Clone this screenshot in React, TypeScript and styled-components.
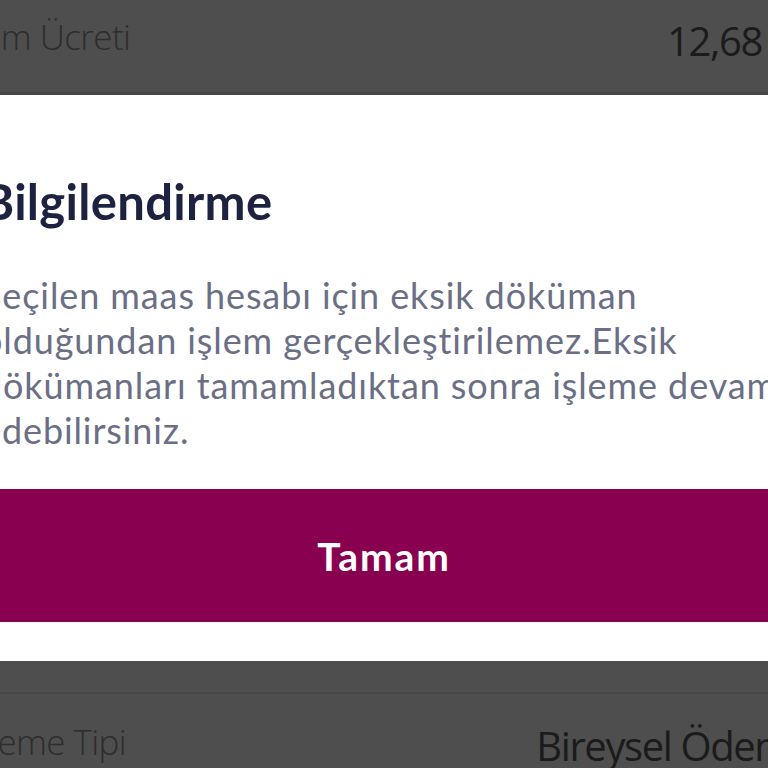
import React from "react";
import styled, { createGlobalStyle } from "styled-components";

const Global = createGlobalStyle`
  html, body { margin: 0; padding: 0; background: #4e4e4e; }
  body { overflow: hidden; }
  * { box-sizing: border-box; }
`;

const Viewport = styled.div`
  width: 768px;
  height: 768px;
  overflow: hidden;
  background: #4e4e4e;
  display: flex;
  flex-direction: column;
`;

const RowList = styled.div`
  margin-left: -49px;
  width: 860px;
  display: flex;
  flex-direction: column;
  flex-shrink: 0;
`;

const InfoRow = styled.div<{ $h: number; $pad: number }>`
  height: ${(p) => p.$h}px;
  padding-top: ${(p) => p.$pad}px;
  display: flex;
  justify-content: space-between;
  align-items: flex-start;
  border-bottom: 3px solid #474747;
`;

const RowLabel = styled.span`
  font-family: "Open Sans", "Liberation Sans", sans-serif;
  font-weight: 300;
  font-size: 35px;
  letter-spacing: -0.6px;
  color: #2d2d2d;
`;

const RowValue = styled.span`
  font-family: "Open Sans", "Liberation Sans", sans-serif;
  font-weight: 400;
  font-size: 40px;
  letter-spacing: -1.4px;
  color: #1b1b1b;
`;

const Dialog = styled.div`
  margin-left: -18px;
  width: 840px;
  flex-shrink: 0;
  background: #ffffff;
  display: flex;
  flex-direction: column;
  align-items: flex-start;
  padding: 78px 0 39px 0;
`;

const Title = styled.h2`
  margin: 0;
  font-family: Lato, "Noto Sans", sans-serif;
  font-weight: 700;
  font-size: 49px;
  line-height: 56px;
  letter-spacing: 0.3px;
  color: #1d2241;
`;

const Message = styled.p`
  margin: 44px 0 0 0;
  font-family: Lato, "Noto Sans", sans-serif;
  font-weight: 400;
  font-size: 36px;
  line-height: 45px;
  letter-spacing: 0.9px;
  color: #6b6f86;
  width: 820px;
`;

const PrimaryButton = styled.button`
  margin-top: 36px;
  width: 804px;
  height: 133px;
  border: none;
  padding: 0;
  background: #8a0050;
  color: #ffffff;
  font-family: Lato, "Noto Sans", sans-serif;
  font-weight: 700;
  font-size: 39px;
  letter-spacing: 1.9px;
  cursor: pointer;
`;

const Spacer = styled.div`
  height: 33px;
  border-bottom: 2px solid #474747;
`;

export default function App() {
  return (
    <>
      <Global />
      <Viewport>
        <RowList>
          <InfoRow $h={95} $pad={13}>
            <RowLabel>İşlem Ücreti</RowLabel>
            <RowValue>12,68 TL</RowValue>
          </InfoRow>
        </RowList>
        <Dialog>
          <Title>Bilgilendirme</Title>
          <Message>
            Seçilen maas hesabı için eksik döküman olduğundan işlem
            gerçekleştirilemez.Eksik dökümanları tamamladıktan sonra işleme
            devam edebilirsiniz.
          </Message>
          <PrimaryButton>Tamam</PrimaryButton>
        </Dialog>
        <RowList>
          <Spacer />
          <InfoRow $h={120} $pad={24}>
            <RowLabel>Ödeme Tipi</RowLabel>
            <RowValue>Bireysel Ödeme</RowValue>
          </InfoRow>
        </RowList>
      </Viewport>
    </>
  );
}
